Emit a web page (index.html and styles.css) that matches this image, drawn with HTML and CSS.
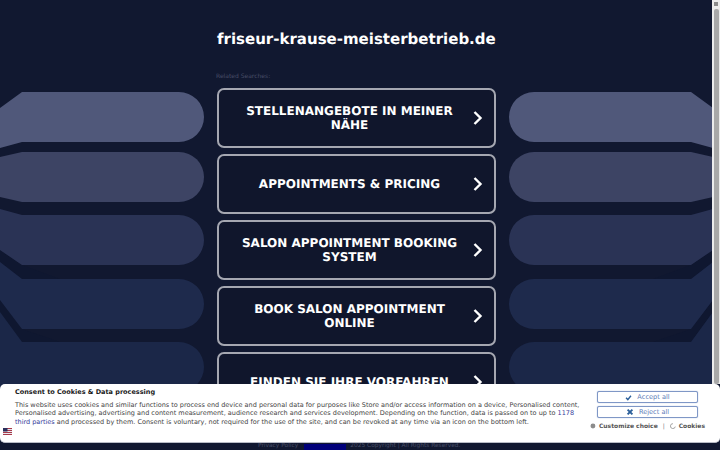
FILE: index.html
```
<!DOCTYPE html>
<html lang="en">
<head>
<meta charset="utf-8">
<title>friseur-krause-meisterbetrieb.de</title>
<link rel="stylesheet" href="styles.css">
</head>
<body>
<svg class="backdrop" width="712" height="450" viewBox="0 0 712 450" aria-hidden="true">
  <defs>
    <g id="side">
      <path class="band" d="M0 262L22 279H60L22 265L0 250Z"/>
      <path class="band" d="M0 312L22 342H60L22 329L0 300Z"/>
      <path class="s1" d="M0 108L22 92H179A25 25 0 0 1 179 142H22L0 148Z"/>
      <path class="s2" d="M0 157L22 152H179A25 25 0 0 1 179 202H22L0 197Z"/>
      <path class="s3" d="M0 209L22 215H179A25 25 0 0 1 179 265H22L0 250Z"/>
      <path class="s4" d="M0 262L22 279H179A25 25 0 0 1 179 329H22L0 300Z"/>
      <path class="s5" d="M0 312L22 342H179A25 25 0 0 1 179 392H0Z"/>
    </g>
  </defs>
  <use href="#side"/>
  <use href="#side" transform="translate(713 0) scale(-1 1)"/>
</svg>
<div class="scrollbar"><span class="scroll-arrow"></span><span class="scroll-thumb"></span></div>
<main class="page">
  <h1 class="domain">friseur-krause-meisterbetrieb.de</h1>
  <p class="related">Related Searches:</p>
  <nav class="links">
    <a class="link" href="#"><span class="link-text">STELLENANGEBOTE IN MEINER NÄHE</span><svg class="chevron" viewBox="0 0 10 16"><path d="M2 2L8 8L2 14"/></svg></a>
    <a class="link" href="#"><span class="link-text">APPOINTMENTS &amp; PRICING</span><svg class="chevron" viewBox="0 0 10 16"><path d="M2 2L8 8L2 14"/></svg></a>
    <a class="link" href="#"><span class="link-text">SALON APPOINTMENT BOOKING SYSTEM</span><svg class="chevron" viewBox="0 0 10 16"><path d="M2 2L8 8L2 14"/></svg></a>
    <a class="link" href="#"><span class="link-text">BOOK SALON APPOINTMENT ONLINE</span><svg class="chevron" viewBox="0 0 10 16"><path d="M2 2L8 8L2 14"/></svg></a>
    <a class="link" href="#"><span class="link-text">FINDEN SIE IHRE VORFAHREN</span><svg class="chevron" viewBox="0 0 10 16"><path d="M2 2L8 8L2 14"/></svg></a>
  </nav>
  <footer class="legal"><a class="legal-link" href="#">Privacy Policy</a><span class="legal-block"></span><span>2025 Copyright | All Rights Reserved.</span></footer>
</main>
<section class="consent">
  <div class="consent-copy">
    <h2 class="consent-title">Consent to Cookies &amp; Data processing</h2>
    <p class="consent-text">This website uses cookies and similar functions to process end device and personal data for purposes like Store and/or access information on a device, Personalised content, Personalised advertising, advertising and content measurement, audience research and services development. Depending on the function, data is passed on to up to <a class="consent-link" href="#">1178 third parties</a> and processed by them. Consent is voluntary, not required for the use of the site, and can be revoked at any time via an icon on the bottom left.</p>
  </div>
  <div class="consent-actions">
    <button class="consent-btn"><svg class="btn-icon" viewBox="0 0 10 10"><path class="check" d="M1.5 5.5L4 8L8.5 2.5"/></svg>Accept all</button>
    <button class="consent-btn"><svg class="btn-icon btn-icon-x" viewBox="0 0 10 10"><path class="cross" d="M2 2L8 8M8 2L2 8"/></svg>Reject all</button>
    <div class="consent-more">
      <svg class="mini-icon" viewBox="0 0 6 6"><circle cx="3" cy="3" r="2.5"/></svg><span>Customize choice</span>
      <span class="sep">|</span>
      <svg class="mini-icon mini-hollow" viewBox="0 0 6 6"><path d="M5.4 3.6A2.5 2.5 0 1 1 3 .6"/></svg><span>Cookies</span>
    </div>
  </div>
  <svg class="flag" viewBox="0 0 9 7" aria-label="US flag"><rect width="9" height="7" fill="#e8e8ee"/><path d="M0 .5H9M0 2.5H9M0 4.5H9M0 6.5H9" stroke="#a83a4a"/><rect width="4.5" height="3.5" fill="#2c2f5c"/></svg>
</section>
</body>
</html>
```
FILE: styles.css
```
* { box-sizing: border-box; }
html, body { margin: 0; height: 450px; overflow: hidden; }
body {
  background: #111830;
  font-family: "DejaVu Sans", sans-serif;
  color: #fff;
  text-rendering: geometricPrecision;
}
.backdrop { position: absolute; left: 0; top: 0; }
.s1 { fill: #50587a; }
.s2 { fill: #3d4464; }
.s3 { fill: #2a3355; }
.s4 { fill: #1e2a4c; }
.s5 { fill: #1b2748; }
.band { fill: #0f1730; }
.scrollbar {
  position: absolute; right: 0; top: 0; width: 8px; height: 384px;
  background: #ececec; display: flex; flex-direction: column; align-items: center;
}
.scroll-arrow { width: 4px; height: 4px; margin-top: 2px; background: #8a8a8a; }
.scroll-thumb { width: 5px; flex: 1; margin-top: 3px; background: #a8a8a8; border-radius: 2px; }
.page {
  position: relative; width: 279px; margin-left: 217px;
  display: flex; flex-direction: column;
}
.domain {
  margin: 0; padding-top: 30px; height: 73px;
  font-size: 15px; line-height: 19px; font-weight: 700; white-space: nowrap;
}
.related { margin: 0 0 0 -1px; height: 15px; font-size: 6px; line-height: 8px; color: #474d66; }
.links { display: flex; flex-direction: column; gap: 6px; }
.link {
  height: 60px; display: flex; align-items: center;
  border: 2px solid #a5a7b1; border-radius: 7px;
  padding: 0 11px 0 17px;
  color: #fff; text-decoration: none;
  font-size: 12px; line-height: 14.5px; font-weight: 700; text-align: center;
  background: #10162c;
}
.link-text { flex: 1; }
.chevron { width: 11px; height: 16px; margin-left: 9px; flex: none; }
.chevron path { fill: none; stroke: #fff; stroke-width: 2.4; }
.legal {
  margin-top: 31px; margin-left: 41px; width: 240px; height: 6px; white-space: nowrap;
  display: flex; font-size: 5.9px; line-height: 7px; color: #474d66;
}
.legal-link { color: #474d66; text-decoration: none; }
.legal-block { width: 42px; height: 8px; margin: 1px 4px 0 6px; background: #00007a; }
.consent {
  position: absolute; left: 0; top: 384px; width: 720px; height: 59px;
  background: #fff; border-radius: 5px; border-bottom: 1px solid #b9bcc6;
  display: flex; color: #333;
}
.consent-copy { width: 590px; padding: 4px 9px 0 15px; flex: none; }
.consent-title { margin: 0 0 3px; font-size: 6.5px; line-height: 9.5px; font-weight: 700; color: #1a1a1a; }
.consent-text { margin: 0; font-size: 6.5px; line-height: 8.6px; color: #444; }
.consent-link { color: #333a9a; text-decoration: none; }
.consent-actions { width: 115px; padding-top: 7px; display: flex; flex-direction: column; align-items: center; gap: 3px; }
.consent-btn {
  width: 101px; height: 12px; margin: 0; padding: 0;
  background: #fff; border: 1px solid #7f97c6; border-radius: 2px; box-shadow: 0 0 1px #7f97c6;
  display: flex; align-items: center; justify-content: center; gap: 5px;
  font-family: inherit; font-size: 6.6px; line-height: 8px; color: #5d7db8;
}
.btn-icon { width: 7px; height: 7px; }
.btn-icon-x { width: 8px; height: 8px; }
.check { fill: none; stroke: #2b5f9a; stroke-width: 2; }
.cross { fill: none; stroke: #2b5f9a; stroke-width: 2.4; }
.consent-more {
  margin-top: 1px; width: 115px; display: flex; align-items: center; gap: 3px; white-space: nowrap;
  font-size: 6px; line-height: 9px; font-weight: 700; color: #555;
}
.sep { font-weight: 400; margin: 0 2px; color: #777; }
.mini-icon { width: 6px; height: 6px; fill: #8c8c8c; margin-top: -2px; }
.mini-hollow { fill: none; stroke: #8c8c8c; stroke-width: .8; }
.flag { position: absolute; left: 3px; top: 44px; width: 9px; height: 7px; }
```
